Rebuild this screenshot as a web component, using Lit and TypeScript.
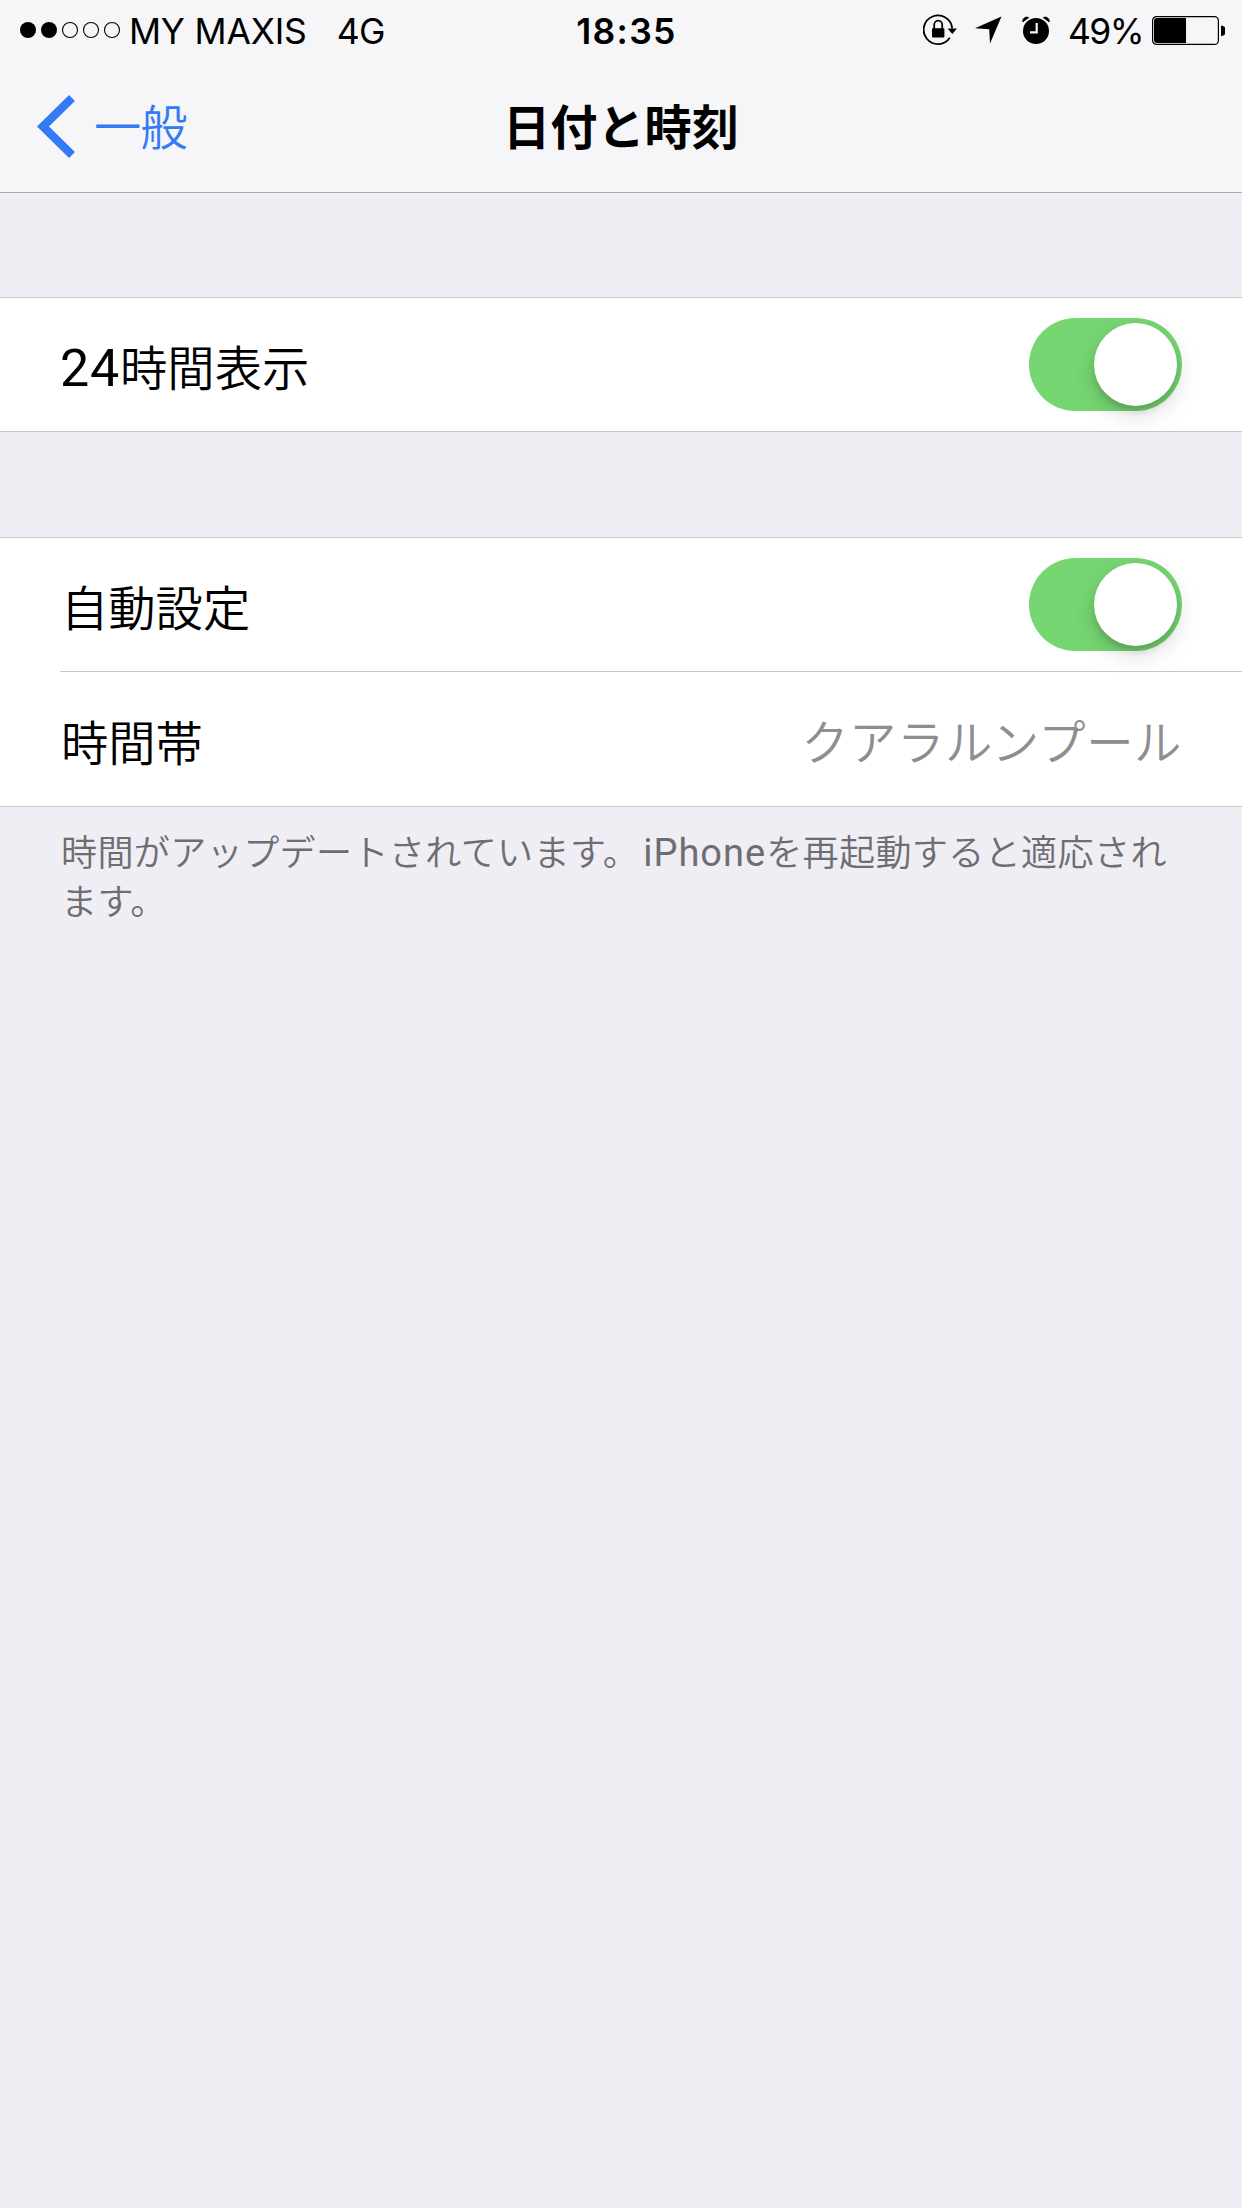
import { LitElement, html, css, svg } from "lit";
import { customElement, property } from "lit/decorators.js";

@customElement("status-bar")
class StatusBar extends LitElement {
  static styles = css`
    :host {
      display: flex;
      height: 60px;
      align-items: center;
      color: #000;
      font-family: Inter, "Noto Sans CJK JP", sans-serif;
      font-size: 35.5px;
      line-height: 44px;
      white-space: nowrap;
    }
    .side {
      display: flex;
      align-items: center;
      flex: 1 1 0;
      min-width: 0;
      height: 60px;
    }
    .left {
      padding-left: 20px;
    }
    .right {
      justify-content: flex-end;
      padding-right: 17px;
    }
    svg {
      display: block;
      flex: none;
    }
    .carrier {
      margin-left: 8px;
      padding-top: 4px;
      letter-spacing: -0.2px;
    }
    .network {
      margin-left: 30px;
      padding-top: 4px;
      letter-spacing: -0.6px;
    }
    .time {
      font-weight: 600;
      letter-spacing: 1.3px;
      padding: 4px 0 0 8px;
    }
    .lock {
      margin-right: 17px;
    }
    .arrow {
      margin-right: 20px;
    }
    .alarm {
      margin-right: 18px;
    }
    .percent {
      padding-top: 4px;
      margin-right: 9px;
      letter-spacing: -1.6px;
    }
  `;
  render() {
    return html`
      <div class="side left">
        <svg width="101" height="18" viewBox="0 0 101 18">
          ${[0, 1, 2, 3, 4].map((i) =>
            i < 2
              ? svg`<circle cx=${8 + i * 21} cy="9" r="8" />`
              : svg`<circle cx=${8 + i * 21} cy="9" r="7.5" fill="none" stroke="#000" stroke-width="1.1" />`
          )}
        </svg>
        <span class="carrier">MY MAXIS</span>
        <span class="network">4G</span>
      </div>
      <span class="time">18:35</span>
      <div class="side right">
        <svg class="lock" width="35" height="32" viewBox="0 0 35 32">
          <path d="M29.2 14.5 A14.3 14.3 0 1 0 26.8 23.8" fill="none" stroke="#000" stroke-width="1.8" />
          <path d="M24.6 14.6 H34 L29.3 20 Z" />
          <rect x="9" y="14.3" width="12.4" height="9.2" rx="0.8" />
          <path d="M11.2 15 V10.8 A4 4.2 0 0 1 19.2 10.8 V15" fill="none" stroke="#000" stroke-width="1.8" />
        </svg>
        <svg class="arrow" width="27" height="28" viewBox="0 0 27 28">
          <path d="M26.5 0.5 L15 27.5 L14.2 13.2 L0 12.3 Z" />
        </svg>
        <svg class="alarm" width="28" height="30" viewBox="0 0 28 30">
          <circle cx="14" cy="16" r="13" />
          <path d="M0.8 6.8 A4 4 0 0 1 6.6 2.6 Z M27.2 6.8 A4 4 0 0 0 21.4 2.6 Z" stroke="#000" stroke-width="1" />
          <path d="M14.7 8 V17.3 H8" fill="none" stroke="#f6f6f8" stroke-width="2.2" />
        </svg>
        <span class="percent">49%</span>
        <svg width="73" height="29" viewBox="0 0 73 29">
          <rect x="0.6" y="0.6" width="65.8" height="27.8" rx="4" fill="none" stroke="#000" stroke-width="1.2" />
          <path d="M5 2 H34 V27 H5 A3 3 0 0 1 2 24 V5 A3 3 0 0 1 5 2 Z" />
          <path d="M69 9.5 A5.2 5.2 0 0 1 69 20 Z" />
        </svg>
      </div>
    `;
  }
}

@customElement("nav-bar")
class NavBar extends LitElement {
  static styles = css`
    :host {
      display: grid;
      grid-template-columns: 1fr auto 1fr;
      align-items: center;
      height: 132px;
      font-family: "Noto Sans CJK JP", sans-serif;
      font-size: 47.2px;
      line-height: 70px;
    }
    .back {
      display: flex;
      align-items: center;
      padding: 0 0 0 36px;
      color: #347af6;
    }
    .back span {
      margin-left: 19px;
      padding-bottom: 3px;
      font-weight: 350;
      letter-spacing: -0.6px;
    }
    .title {
      padding-bottom: 3px;
      color: #000;
      font-weight: 600;
    }
  `;
  render() {
    return html`
      <div class="back">
        <svg width="39" height="63" viewBox="0 0 39 63">
          <path d="M36 3 L7 31.5 L36 60" fill="none" stroke="#347af6" stroke-width="8.4" />
        </svg>
        <span>一般</span>
      </div>
      <span class="title">日付と時刻</span>
    `;
  }
}

@customElement("toggle-switch")
class ToggleSwitch extends LitElement {
  static styles = css`
    :host {
      display: flex;
      justify-content: flex-end;
      box-sizing: border-box;
      width: 153px;
      height: 93px;
      padding: 5px;
      border-radius: 47px;
      background: #76d672;
    }
    .knob {
      width: 83px;
      height: 83px;
      border-radius: 50%;
      background: #fff;
      box-shadow: 0 9px 24px rgba(0, 0, 0, 0.15), 0 5px 6px rgba(0, 0, 0, 0.13);
    }
  `;
  render() {
    return html`<div class="knob"></div>`;
  }
}

@customElement("setting-row")
class SettingRow extends LitElement {
  @property() latin = "";
  @property() label = "";
  @property() value = "";
  static styles = css`
    :host {
      display: flex;
      align-items: center;
      justify-content: space-between;
      padding: 0 60px 0 61px;
      height: 133px;
      background: #fff;
      color: #000;
      font-family: "Noto Sans CJK JP", sans-serif;
      font-size: 47.3px;
      line-height: 70px;
      font-weight: 350;
    }
    .label,
    .value {
      padding-top: 3px;
    }
    .latin {
      margin-left: -1px;
      font-family: Roboto, sans-serif;
      font-weight: 400;
      font-size: 52px;
      line-height: 0;
      letter-spacing: 0.8px;
    }
    .value {
      padding-top: 1px;
      color: #8e8e91;
      letter-spacing: 0.6px;
    }
  `;
  render() {
    return html`
      <span class="label">${this.latin ? html`<span class="latin">${this.latin}</span>` : ""}${this.label}</span>
      ${this.value
        ? html`<span class="value">${this.value}</span>`
        : html`<toggle-switch></toggle-switch>`}
    `;
  }
}

@customElement("app-root")
class AppRoot extends LitElement {
  static styles = css`
    :host {
      display: flex;
      flex-direction: column;
      width: 1242px;
      height: 2208px;
      overflow: hidden;
      background: #efeef4;
    }
    .header {
      flex: none;
      background: #f6f6f8;
      border-bottom: 1px solid #a9a9ad;
    }
    .group {
      flex: none;
      margin-top: 104px;
      background: #fff;
      border-top: 1px solid #c8c7cc;
      border-bottom: 1px solid #c8c7cc;
    }
    .second {
      margin-top: 105px;
    }
    .divider {
      height: 1px;
      margin-left: 60px;
      background: #c8c7cc;
    }
    .last {
      height: 134px;
    }
    .note {
      margin: 19px 60px 0 61px;
      color: #6d6d72;
      font-family: "Noto Sans CJK JP", sans-serif;
      font-size: 36.1px;
      line-height: 48.5px;
      font-weight: 350;
      letter-spacing: 0.35px;
      white-space: nowrap;
    }
    .latin {
      margin-left: 4px;
      font-family: Roboto, sans-serif;
      font-weight: 400;
      font-size: 38px;
      line-height: 0;
      letter-spacing: 1px;
    }
  `;
  render() {
    return html`
      <div class="header">
        <status-bar></status-bar>
        <nav-bar></nav-bar>
      </div>
      <div class="group">
        <setting-row latin="24" label="時間表示"></setting-row>
      </div>
      <div class="group second">
        <setting-row label="自動設定"></setting-row>
        <div class="divider"></div>
        <setting-row class="last" label="時間帯" value="クアラルンプール"></setting-row>
      </div>
      <div class="note">
        時間がアップデートされています。<span class="latin">iPhone</span>を再起動すると適応され<br />ます。
      </div>
    `;
  }
}
